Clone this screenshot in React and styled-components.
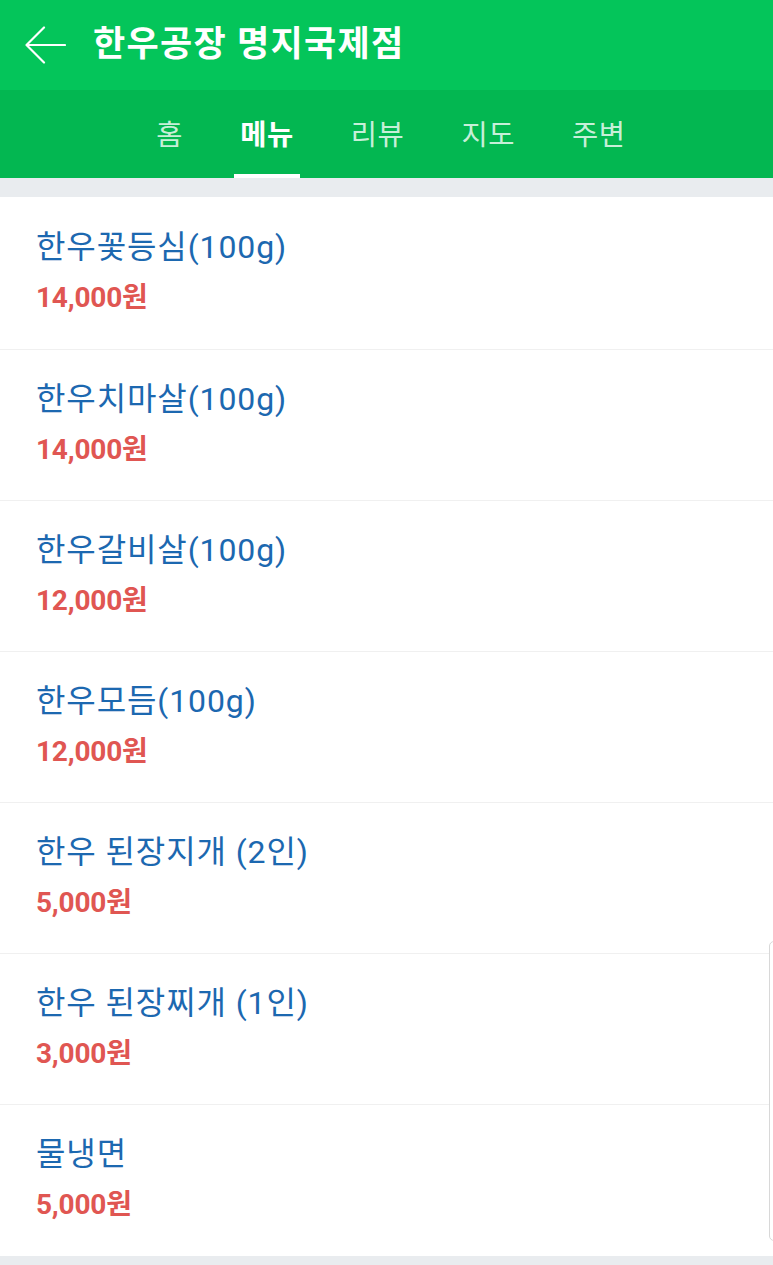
import React from "react";
import styled, { createGlobalStyle } from "styled-components";

const menuItems = [
  { name: "한우꽃등심(100g)", price: "14,000원" },
  { name: "한우치마살(100g)", price: "14,000원" },
  { name: "한우갈비살(100g)", price: "12,000원" },
  { name: "한우모듬(100g)", price: "12,000원" },
  { name: "한우 된장지개 (2인)", price: "5,000원" },
  { name: "한우 된장찌개 (1인)", price: "3,000원" },
  { name: "물냉면", price: "5,000원" },
];

const tabs = ["홈", "메뉴", "리뷰", "지도", "주변"];

const App = () => {
  return (
    <>
      <GlobalStyle />
      <PageStyled>
        <HeaderStyled>
          <BackButtonStyled aria-label="back">
            <svg width="42" height="38" viewBox="0 0 42 38" fill="none">
              <path
                d="M41 19H2.5M20 1.5L2.5 19L20 36.5"
                stroke="#fff"
                strokeWidth="2.2"
                strokeLinecap="round"
                strokeLinejoin="round"
              />
            </svg>
          </BackButtonStyled>
          <TitleStyled>한우공장 명지국제점</TitleStyled>
        </HeaderStyled>

        <TabBarStyled>
          {tabs.map((tab) => (
            <TabStyled key={tab} $active={tab === "메뉴"}>
              {tab}
            </TabStyled>
          ))}
        </TabBarStyled>

        <ListStyled>
          {menuItems.map((item) => (
            <ItemStyled key={item.name}>
              <NameStyled>{item.name}</NameStyled>
              <PriceStyled>{item.price}</PriceStyled>
            </ItemStyled>
          ))}
          <ScrollIndicatorStyled />
        </ListStyled>
      </PageStyled>
    </>
  );
};

export default App;

const GlobalStyle = createGlobalStyle`
  html, body {
    margin: 0;
    padding: 0;
    background: #e9ecef;
  }
  * {
    box-sizing: border-box;
  }
  body {
    font-family: Roboto, "Noto Sans CJK KR", "Noto Sans", sans-serif;
  }
`;
const PageStyled = styled.div`
  width: 773px;
  min-height: 1265px;
  background: #e9ecef;
  overflow: hidden;
`;
const HeaderStyled = styled.header`
  display: flex;
  align-items: center;
  height: 90px;
  padding: 0 0 0 24px;
  background: #04c55a;
`;
const BackButtonStyled = styled.div`
  display: flex;
  align-items: center;
  width: 42px;
  height: 38px;
  margin: 0 27px 0 0;
`;
const TitleStyled = styled.h1`
  margin: 0;
  font-size: 35px;
  font-weight: 700;
  line-height: 42px;
  color: #fff;
  letter-spacing: 1.3px;
`;
const TabBarStyled = styled.nav`
  display: flex;
  justify-content: center;
  gap: 45px;
  height: 88px;
  padding: 0 0 0 9px;
  background: #03b751;
`;
const TabStyled = styled.div`
  display: flex;
  align-items: center;
  justify-content: center;
  padding: 0 6px 4px;
  position: relative;
  font-size: 28.5px;
  letter-spacing: 0.6px;
  font-weight: ${({ $active }) => ($active ? 700 : 400)};
  color: ${({ $active }) => ($active ? "#fff" : "rgba(255, 255, 255, 0.8)")};
  &::after {
    content: "";
    display: ${({ $active }) => ($active ? "block" : "none")};
    position: absolute;
    left: 0;
    right: 0;
    bottom: 0;
    height: 4px;
    background: #fff;
  }
`;
const ListStyled = styled.ul`
  position: relative;
  margin: 19px 0 0;
  padding: 1px 0 0;
  list-style: none;
  background: #fff;
`;
const ItemStyled = styled.li`
  display: flex;
  flex-direction: column;
  height: 151px;
  padding: 29px 36px 0;
  border-bottom: 1px solid #f0f0f0;
  &:first-of-type {
    height: 152px;
  }
  &:last-of-type {
    border-bottom: none;
  }
`;
const NameStyled = styled.div`
  font-size: 32px;
  font-weight: 400;
  line-height: 40px;
  letter-spacing: 0.9px;
  color: #1c68b0;
`;
const PriceStyled = styled.div`
  margin: 14px 0 0;
  font-size: 28px;
  font-weight: 700;
  line-height: 34px;
  color: #e05652;
  letter-spacing: -0.2px;
`;
const ScrollIndicatorStyled = styled.div`
  position: absolute;
  top: 744px;
  right: -6px;
  width: 10px;
  height: 300px;
  border: 1px solid #d8d8d8;
  border-radius: 6px;
  background: #fff;
`;
